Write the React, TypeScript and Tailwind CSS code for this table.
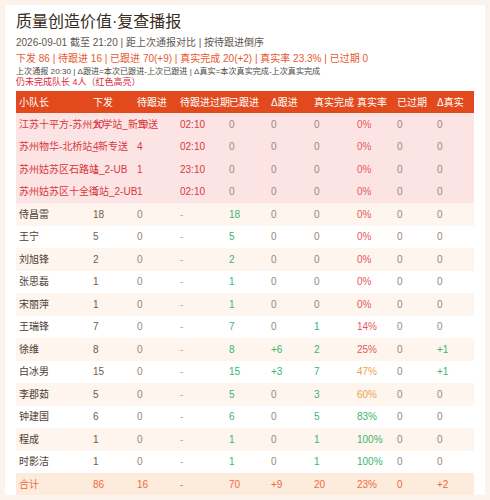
import React from "react";

type Row = {
  name: string;
  issued: string;
  pending: string;
  overdue: string;
  followed: string;
  dFollow: string;
  real: string;
  rate: string;
  expired: string;
  dReal: string;
};

const redRows: Row[] = [
  { name: "江苏十平方-苏州大学站_新专送", issued: "10", pending: "10", overdue: "02:10", followed: "0", dFollow: "0", real: "0", rate: "0%", expired: "0", dReal: "0" },
  { name: "苏州物华-北桥站_新专送", issued: "4", pending: "4", overdue: "02:10", followed: "0", dFollow: "0", real: "0", rate: "0%", expired: "0", dReal: "0" },
  { name: "苏州姑苏区石路站_2-UB", issued: "1", pending: "1", overdue: "23:10", followed: "0", dFollow: "0", real: "0", rate: "0%", expired: "0", dReal: "0" },
  { name: "苏州姑苏区十全街站_2-UB", issued: "1", pending: "1", overdue: "02:10", followed: "0", dFollow: "0", real: "0", rate: "0%", expired: "0", dReal: "0" },
];

const rows: Row[] = [
  { name: "侍昌雷", issued: "18", pending: "0", overdue: "-", followed: "18", dFollow: "0", real: "0", rate: "0%", expired: "0", dReal: "0" },
  { name: "王宁", issued: "5", pending: "0", overdue: "-", followed: "5", dFollow: "0", real: "0", rate: "0%", expired: "0", dReal: "0" },
  { name: "刘旭锋", issued: "2", pending: "0", overdue: "-", followed: "2", dFollow: "0", real: "0", rate: "0%", expired: "0", dReal: "0" },
  { name: "张思磊", issued: "1", pending: "0", overdue: "-", followed: "1", dFollow: "0", real: "0", rate: "0%", expired: "0", dReal: "0" },
  { name: "宋丽萍", issued: "1", pending: "0", overdue: "-", followed: "1", dFollow: "0", real: "0", rate: "0%", expired: "0", dReal: "0" },
  { name: "王瑞锋", issued: "7", pending: "0", overdue: "-", followed: "7", dFollow: "0", real: "1", rate: "14%", expired: "0", dReal: "0" },
  { name: "徐维", issued: "8", pending: "0", overdue: "-", followed: "8", dFollow: "+6", real: "2", rate: "25%", expired: "0", dReal: "+1" },
  { name: "白冰男", issued: "15", pending: "0", overdue: "-", followed: "15", dFollow: "+3", real: "7", rate: "47%", expired: "0", dReal: "+1" },
  { name: "李郡茹", issued: "5", pending: "0", overdue: "-", followed: "5", dFollow: "0", real: "3", rate: "60%", expired: "0", dReal: "0" },
  { name: "钟建国", issued: "6", pending: "0", overdue: "-", followed: "6", dFollow: "0", real: "5", rate: "83%", expired: "0", dReal: "0" },
  { name: "程成", issued: "1", pending: "0", overdue: "-", followed: "1", dFollow: "0", real: "1", rate: "100%", expired: "0", dReal: "0" },
  { name: "时影洁", issued: "1", pending: "0", overdue: "-", followed: "1", dFollow: "0", real: "1", rate: "100%", expired: "0", dReal: "0" },
];

const GRID =
  "grid grid-cols-[74px_44px_43px_49px_42px_43px_43px_40px_40px_40px] items-center";
const CELL = "pl-[3px] whitespace-nowrap";

const GRAY = "text-[#9a8878]";
const GREEN = "text-[#3cb56e]";
const RED = "text-[#e8585a]";
const ORANGE = "text-[#eda24a]";

function rateColor(r: string) {
  const n = parseInt(r, 10);
  if (n >= 80) return GREEN;
  if (n >= 40) return ORANGE;
  return RED;
}

function numColor(v: string) {
  if (v === "0") return GRAY;
  return GREEN;
}

function RedRow({ r }: { r: Row }) {
  return (
    <div className={`${GRID} h-[22.5px] bg-[#fde4e4] text-[10px]`}>
      <div className={`${CELL} text-[#d8383e]`}>{r.name}</div>
      <div className={`${CELL} text-[#d8383e]`}>{r.issued}</div>
      <div className={`${CELL} text-[#d8383e]`}>{r.pending}</div>
      <div className={`${CELL} text-[#d8383e]`}>{r.overdue}</div>
      <div className={`${CELL} ${GRAY}`}>{r.followed}</div>
      <div className={`${CELL} ${GRAY}`}>{r.dFollow}</div>
      <div className={`${CELL} ${GRAY}`}>{r.real}</div>
      <div className={`${CELL} ${RED}`}>{r.rate}</div>
      <div className={`${CELL} ${GRAY}`}>{r.expired}</div>
      <div className={`${CELL} ${GRAY}`}>{r.dReal}</div>
    </div>
  );
}

function NormalRow({ r, shaded }: { r: Row; shaded: boolean }) {
  return (
    <div className={`${GRID} h-[22.5px] text-[10px] ${shaded ? "bg-[#fdf5ee]" : "bg-white"}`}>
      <div className={`${CELL} text-[#4e4036]`}>{r.name}</div>
      <div className={`${CELL} text-[#6e5e50]`}>{r.issued}</div>
      <div className={`${CELL} ${GRAY}`}>{r.pending}</div>
      <div className={`${CELL} text-[#b8aaa0]`}>{r.overdue}</div>
      <div className={`${CELL} ${GREEN}`}>{r.followed}</div>
      <div className={`${CELL} ${numColor(r.dFollow)}`}>{r.dFollow}</div>
      <div className={`${CELL} ${numColor(r.real)}`}>{r.real}</div>
      <div className={`${CELL} ${rateColor(r.rate)}`}>{r.rate}</div>
      <div className={`${CELL} ${GRAY}`}>{r.expired}</div>
      <div className={`${CELL} ${numColor(r.dReal)}`}>{r.dReal}</div>
    </div>
  );
}

export default function App() {
  const headers = ["小队长", "下发", "待跟进", "待跟进过期", "已跟进", "Δ跟进", "真实完成", "真实率", "已过期", "Δ真实"];
  const total = ["合计", "86", "16", "-", "70", "+9", "20", "23%", "0", "+2"];
  return (
    <div
      className="min-h-screen bg-[#fcf3ec] pt-[5px] pl-[5px]"
      style={{ fontFamily: '"Liberation Sans", "Noto Sans CJK SC", sans-serif' }}
    >
      <div className="w-[480px] h-[490px] bg-white px-[11px] pt-[5px] overflow-hidden">
        <div className="text-[16px] leading-[24px] text-[#3a2b20]">质量创造价值·复查播报</div>
        <div className="mt-[1px] text-[10px] leading-[16px] text-[#5e5650]">
          2026-09-01 截至 21:20 | 距上次通报对比 | 按待跟进倒序
        </div>
        <div className="text-[10px] leading-[15px] text-[#e8582e]">
          下发 86 | 待跟进 16 | 已跟进 70(+9) | 真实完成 20(+2) | 真实率 23.3% | 已过期 0
        </div>
        <div className="text-[8.1px] leading-[11px] text-[#4e4640]">
          上次通报 20:30 | Δ跟进=本次已跟进-上次已跟进 | Δ真实=本次真实完成-上次真实完成
        </div>
        <div className="text-[9px] leading-[11px] text-[#d8283c]">仍未完成队长 4人（红色高亮）</div>
        <div className="mt-[3px]">
          <div className={`${GRID} h-[22px] bg-[#e2491c] text-[10px] text-white`}>
            {headers.map((h) => (
              <div key={h} className={CELL}>
                {h}
              </div>
            ))}
          </div>
          {redRows.map((r) => (
            <RedRow key={r.name} r={r} />
          ))}
          {rows.map((r, i) => (
            <NormalRow key={r.name} r={r} shaded={i % 2 === 0} />
          ))}
          <div className={`${GRID} h-[22.5px] bg-[#fdebdc] text-[10px] text-[#ee6a3e]`}>
            {total.map((t, i) => (
              <div key={i} className={CELL}>
                {t}
              </div>
            ))}
          </div>
        </div>
      </div>
    </div>
  );
}
